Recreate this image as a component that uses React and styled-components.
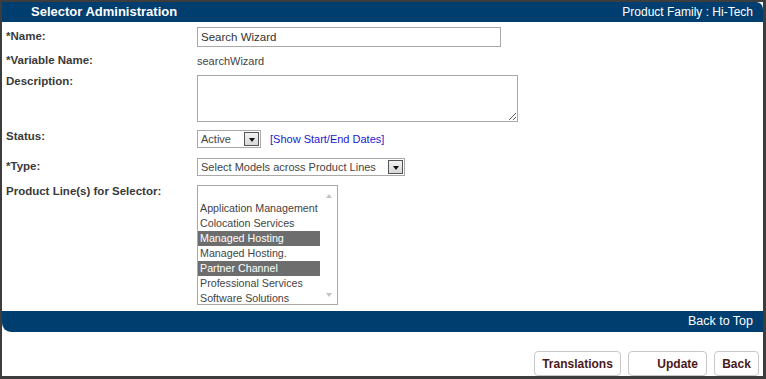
import React from "react";
import styled, { createGlobalStyle } from "styled-components";

const GlobalStyle = createGlobalStyle`
 html, body {
  margin: 0;
  padding: 0;
  background: #fff;
  font-family: "Liberation Sans", Arial, sans-serif;
 }
`;

const Frame = styled.div`
 width: 766px;
 height: 379px;
 box-sizing: border-box;
 border: 2px solid #3d3d3d;
 border-right-width: 3px;
 border-bottom-width: 3px;
 background: #fff;
 display: flex;
 flex-direction: column;
`;

const Header = styled.div`
 height: 20px;
 background: #003e70;
 border-top-right-radius: 7px;
 display: flex;
 align-items: center;
 justify-content: space-between;
 padding: 0 10px 0 29px;
 color: #fff;
`;

const Title = styled.span`
 font-weight: bold;
 font-size: 13px;
`;

const Family = styled.span`
 font-size: 12px;
`;

const Form = styled.div`
 padding: 5px 4px 0 4px;
 display: flex;
 flex-direction: column;
`;

const Row = styled.div`
 display: flex;
 align-items: ${p => (p.$top ? "flex-start" : "center")};
 margin-top: ${p => p.$gap || 0}px;
 min-height: ${p => p.$h || 0}px;
`;

const Label = styled.div`
 width: 191px;
 flex: none;
 font-size: 11.5px;
 font-weight: bold;
 color: #3a3a3a;
 line-height: 13px;
`;

const Value = styled.span`
 font-size: 11px;
 color: #444;
`;

const TextInput = styled.input`
 width: 304px;
 height: 20px;
 box-sizing: border-box;
 border: 1px solid #a9a9a9;
 padding: 0 3px;
 font-family: "Liberation Sans", Arial, sans-serif;
 font-size: 11.5px;
 color: #333;
 outline: none;
`;

const TextArea = styled.textarea`
 width: 321px;
 height: 47px;
 box-sizing: border-box;
 border: 1px solid #a9a9a9;
 margin: 0;
 font-family: "Liberation Sans", Arial, sans-serif;
 outline: none;
`;

const Select = styled.div`
 width: ${p => p.$w}px;
 height: 18px;
 box-sizing: border-box;
 border: 1px solid #a9a9a9;
 display: flex;
 align-items: center;
 justify-content: space-between;
 padding: 0 1px 0 3px;
 font-size: 11px;
 color: #444;
 background: #fff;
`;

const ArrowButton = styled.div`
 width: 15px;
 height: 14px;
 box-sizing: border-box;
 border: 1px solid #555;
 background: linear-gradient(#f2f2f2, #d8d8d8);
 display: flex;
 align-items: center;
 justify-content: center;

 &::after {
  content: "";
  margin-top: 2px;
  border-left: 3.5px solid transparent;
  border-right: 3.5px solid transparent;
  border-top: 4px solid #111;
 }
`;

const DateLink = styled.a`
 align-self: center;
 margin-left: 9px;
 font-size: 11px;
 color: #1a1acc;
 text-decoration: none;
`;

const ListBox = styled.div`
 width: 141px;
 height: 120px;
 box-sizing: border-box;
 border: 1px solid #a9a9a9;
 display: flex;
 overflow: hidden;
`;

const Options = styled.div`
 flex: 1;
 overflow: hidden;
 display: flex;
 flex-direction: column;
`;

const Option = styled.div`
 height: 15px;
 flex: none;
 line-height: 15px;
 padding-left: 2px;
 font-size: 10.7px;
 white-space: nowrap;
 color: ${p => (p.$selected ? "#fff" : "#444")};
 background: ${p => (p.$selected ? "#6d6d6d" : "transparent")};
`;

const Scroll = styled.div`
 width: 17px;
 flex: none;
 display: flex;
 flex-direction: column;
 justify-content: space-between;
 align-items: center;
 padding: 8px 0 7px;
 box-sizing: border-box;
`;

const ScrollArrow = styled.div`
 border-left: 3.5px solid transparent;
 border-right: 3.5px solid transparent;
 ${p => (p.$up ? "border-bottom" : "border-top")}: 4px solid #c4c4c4;
`;

const BottomBar = styled.div`
 margin-top: 6px;
 height: 22px;
 background: #003e70;
 border-bottom-left-radius: 9px;
 display: flex;
 align-items: center;
 justify-content: flex-end;
 padding-right: 10px;
 color: #fff;
 font-size: 12.5px;
`;

const Actions = styled.div`
 display: flex;
 justify-content: flex-end;
 gap: 7px;
 margin-top: 19px;
 padding-right: 4px;
`;

const Button = styled.button`
 height: 25px;
 width: ${p => p.$w}px;
 box-sizing: border-box;
 border: 1px solid #c8c8c8;
 border-radius: 4px;
 background: #fff;
 color: #4a1a1a;
 font-family: "Liberation Sans", Arial, sans-serif;
 font-weight: bold;
 font-size: 12px;
 padding: ${p => (p.$icon ? "0 8px 0 20px" : "0")};
 text-align: ${p => (p.$icon ? "right" : "center")};
`;

const productLines = [
 { name: "", selected: false },
 { name: "Application Management", selected: false },
 { name: "Colocation Services", selected: false },
 { name: "Managed Hosting", selected: true },
 { name: "Managed Hosting.", selected: false },
 { name: "Partner Channel", selected: true },
 { name: "Professional Services", selected: false },
 { name: "Software Solutions", selected: false }
];

export default function App() {
 return (
  <>
   <GlobalStyle />
   <Frame>
    <Header>
     <Title>Selector Administration</Title>
     <Family>Product Family : Hi-Tech</Family>
    </Header>
    <Form>
     <Row>
      <Label>*Name:</Label>
      <TextInput defaultValue="Search Wizard" />
     </Row>
     <Row $gap={6} $h={16}>
      <Label>*Variable Name:</Label>
      <Value>searchWizard</Value>
     </Row>
     <Row $gap={6} $top>
      <Label>Description:</Label>
      <TextArea />
     </Row>
     <Row $gap={8} $top>
      <Label>Status:</Label>
      <Select $w={64}>
       <span>Active</span>
       <ArrowButton />
      </Select>
      <DateLink href="#">[Show Start/End Dates]</DateLink>
     </Row>
     <Row $gap={10}>
      <Label>*Type:</Label>
      <Select $w={208}>
       <span>Select Models across Product Lines</span>
       <ArrowButton />
      </Select>
     </Row>
     <Row $gap={9} $top>
      <Label>Product Line(s) for Selector:</Label>
      <ListBox>
       <Options>
        {productLines.map((p, i) => (
         <Option key={i} $selected={p.selected}>
          {p.name}
         </Option>
        ))}
       </Options>
       <Scroll>
        <ScrollArrow $up />
        <ScrollArrow />
       </Scroll>
      </ListBox>
     </Row>
    </Form>
    <BottomBar>Back to Top</BottomBar>
    <Actions>
     <Button $w={87}>Translations</Button>
     <Button $w={79} $icon>
      Update
     </Button>
     <Button $w={45}>Back</Button>
    </Actions>
   </Frame>
  </>
 );
}
